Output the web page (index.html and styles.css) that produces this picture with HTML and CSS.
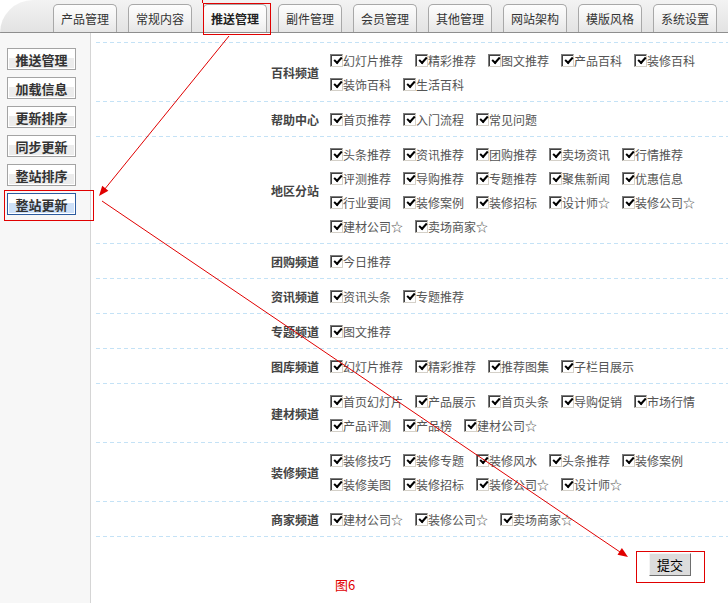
FILE: index.html
```html
<!DOCTYPE html>
<html lang="zh-CN">
<head>
<meta charset="utf-8">
<title>推送管理</title>
<link rel="stylesheet" href="styles.css">
</head>
<body>
<div class="page">
  <div class="topbar">
    <div class="tab">产品管理</div>
    <div class="tab">常规内容</div>
    <div class="tab active">推送管理</div>
    <div class="tab">副件管理</div>
    <div class="tab">会员管理</div>
    <div class="tab">其他管理</div>
    <div class="tab">网站架构</div>
    <div class="tab">模版风格</div>
    <div class="tab">系统设置</div>
  </div>
  <div class="layout">
    <aside class="side">
      <div class="sbtn">推送管理</div>
      <div class="sbtn">加载信息</div>
      <div class="sbtn">更新排序</div>
      <div class="sbtn">同步更新</div>
      <div class="sbtn">整站排序</div>
      <div class="sbtn active">整站更新</div>
    </aside>
    <main class="main">
      <div class="row">
        <div class="label">百科频道</div>
        <div class="opts">
          <span class="opt"><i class="cb"></i>幻灯片推荐</span>
          <span class="opt"><i class="cb"></i>精彩推荐</span>
          <span class="opt"><i class="cb"></i>图文推荐</span>
          <span class="opt"><i class="cb"></i>产品百科</span>
          <span class="opt"><i class="cb"></i>装修百科</span>
          <span class="opt"><i class="cb"></i>装饰百科</span>
          <span class="opt"><i class="cb"></i>生活百科</span>
        </div>
      </div>
      <div class="row">
        <div class="label">帮助中心</div>
        <div class="opts">
          <span class="opt"><i class="cb"></i>首页推荐</span>
          <span class="opt"><i class="cb"></i>入门流程</span>
          <span class="opt"><i class="cb"></i>常见问题</span>
        </div>
      </div>
      <div class="row">
        <div class="label">地区分站</div>
        <div class="opts">
          <span class="opt"><i class="cb"></i>头条推荐</span>
          <span class="opt"><i class="cb"></i>资讯推荐</span>
          <span class="opt"><i class="cb"></i>团购推荐</span>
          <span class="opt"><i class="cb"></i>卖场资讯</span>
          <span class="opt"><i class="cb"></i>行情推荐</span>
          <span class="opt"><i class="cb"></i>评测推荐</span>
          <span class="opt"><i class="cb"></i>导购推荐</span>
          <span class="opt"><i class="cb"></i>专题推荐</span>
          <span class="opt"><i class="cb"></i>聚焦新闻</span>
          <span class="opt"><i class="cb"></i>优惠信息</span>
          <span class="opt"><i class="cb"></i>行业要闻</span>
          <span class="opt"><i class="cb"></i>装修案例</span>
          <span class="opt"><i class="cb"></i>装修招标</span>
          <span class="opt"><i class="cb"></i>设计师☆</span>
          <span class="opt"><i class="cb"></i>装修公司☆</span>
          <span class="opt"><i class="cb"></i>建材公司☆</span>
          <span class="opt"><i class="cb"></i>卖场商家☆</span>
        </div>
      </div>
      <div class="row">
        <div class="label">团购频道</div>
        <div class="opts">
          <span class="opt"><i class="cb"></i>今日推荐</span>
        </div>
      </div>
      <div class="row">
        <div class="label">资讯频道</div>
        <div class="opts">
          <span class="opt"><i class="cb"></i>资讯头条</span>
          <span class="opt"><i class="cb"></i>专题推荐</span>
        </div>
      </div>
      <div class="row">
        <div class="label">专题频道</div>
        <div class="opts">
          <span class="opt"><i class="cb"></i>图文推荐</span>
        </div>
      </div>
      <div class="row">
        <div class="label">图库频道</div>
        <div class="opts">
          <span class="opt"><i class="cb"></i>幻灯片推荐</span>
          <span class="opt"><i class="cb"></i>精彩推荐</span>
          <span class="opt"><i class="cb"></i>推荐图集</span>
          <span class="opt"><i class="cb"></i>子栏目展示</span>
        </div>
      </div>
      <div class="row">
        <div class="label">建材频道</div>
        <div class="opts">
          <span class="opt"><i class="cb"></i>首页幻灯片</span>
          <span class="opt"><i class="cb"></i>产品展示</span>
          <span class="opt"><i class="cb"></i>首页头条</span>
          <span class="opt"><i class="cb"></i>导购促销</span>
          <span class="opt"><i class="cb"></i>市场行情</span>
          <span class="opt"><i class="cb"></i>产品评测</span>
          <span class="opt"><i class="cb"></i>产品榜</span>
          <span class="opt"><i class="cb"></i>建材公司☆</span>
        </div>
      </div>
      <div class="row">
        <div class="label">装修频道</div>
        <div class="opts">
          <span class="opt"><i class="cb"></i>装修技巧</span>
          <span class="opt"><i class="cb"></i>装修专题</span>
          <span class="opt"><i class="cb"></i>装修风水</span>
          <span class="opt"><i class="cb"></i>头条推荐</span>
          <span class="opt"><i class="cb"></i>装修案例</span>
          <span class="opt"><i class="cb"></i>装修美图</span>
          <span class="opt"><i class="cb"></i>装修招标</span>
          <span class="opt"><i class="cb"></i>装修公司☆</span>
          <span class="opt"><i class="cb"></i>设计师☆</span>
        </div>
      </div>
      <div class="row last">
        <div class="label">商家频道</div>
        <div class="opts">
          <span class="opt"><i class="cb"></i>建材公司☆</span>
          <span class="opt"><i class="cb"></i>装修公司☆</span>
          <span class="opt"><i class="cb"></i>卖场商家☆</span>
        </div>
      </div>
      <div class="submit-row"><button class="submit" type="button">提交</button></div>
      <div class="caption">图6</div>
    </main>
  </div>
  <svg class="annot" width="728" height="603" viewBox="0 0 728 603">
    <g fill="none" stroke="#e00000" stroke-width="1">
      <rect x="203.5" y="3.5" width="67" height="31"/>
      <line x1="202.5" y1="0" x2="202.5" y2="3"/>
      <rect x="4.5" y="190.5" width="89" height="30"/>
      <rect x="636.5" y="551.5" width="68" height="31"/>
      <line x1="229" y1="36" x2="104" y2="190"/>
      <line x1="102" y1="201" x2="620" y2="552"/>
    </g>
    <g fill="#e00000">
      <polygon points="99,196 108.4,190.7 102.2,185.7"/>
      <polygon points="628,557 617.5,554.7 621.9,548.1"/>
    </g>
  </svg>
</div>
</body>
</html>
```

FILE: styles.css
```css
* {
  box-sizing: border-box;
  margin: 0;
  padding: 0;
}

html, body {
  width: 728px;
  height: 603px;
  overflow: hidden;
  background: #fff;
}

body {
  font-family: "Noto Sans CJK SC", "Noto Sans", sans-serif;
  font-size: 12px;
  color: #555;
}

.page {
  position: relative;
  width: 728px;
  height: 603px;
}

/* top tab bar */
.topbar {
  height: 33px;
  display: flex;
  align-items: flex-end;
  gap: 11px;
  padding-left: 53px;
  border-bottom: 1px solid #8e8e8e;
  border-top-left-radius: 34px;
  background: linear-gradient(#f3f3f3, #e3e3e3);
}

.tab {
  width: 64px;
  height: 28px;
  display: flex;
  align-items: center;
  justify-content: center;
  border: 1px solid #a8a8a8;
  border-bottom: none;
  border-radius: 5px 5px 0 0;
  background: linear-gradient(#fdfdfd, #f2f2f2 55%, #e6e6e6);
  color: #333;
  font-size: 12px;
  line-height: 1;
}

.tab.active {
  font-weight: bold;
  color: #222;
  background: linear-gradient(#ffffff, #f7f7f7 60%, #ececec);
}

/* layout */
.layout {
  display: flex;
  height: 570px;
}

.side {
  width: 91px;
  flex: none;
  background: #f7f7f7;
  border-right: 1px solid #d5d5d5;
  padding: 15px 0 0 7px;
  display: flex;
  flex-direction: column;
  gap: 7px;
}

.sbtn {
  width: 69px;
  height: 22px;
  border: 1px solid #a4a4a4;
  box-shadow: inset 0 0 0 1px #fff;
  background: linear-gradient(#ffffff 0, #ffffff 45%, #ececec 45%, #ececec 100%);
  font-weight: bold;
  font-size: 13px;
  color: #333;
  display: flex;
  align-items: center;
  justify-content: center;
  line-height: 1;
}

.sbtn.active {
  border-color: #2b5b9f;
  background: linear-gradient(#ffffff 0, #ffffff 45%, #cde0f8 45%, #cde0f8 100%);
}

.main {
  flex: 1;
  padding: 9px 0 0 5px;
  min-width: 0;
}

.row {
  display: flex;
  padding: 6px 0 5px;
  background: linear-gradient(to right, #c4e2f6 4px, transparent 4px) top left / 7px 1px repeat-x;
}

.row.last {
  padding-bottom: 6px;
  background:
    linear-gradient(to right, #c4e2f6 4px, transparent 4px) top left / 7px 1px repeat-x,
    linear-gradient(to right, #c4e2f6 4px, transparent 4px) bottom left / 7px 1px repeat-x;
}

.label {
  width: 234px;
  flex: none;
  align-self: center;
  text-align: right;
  padding-right: 11px;
  font-weight: bold;
  color: #444;
  font-size: 12px;
}

.opts {
  width: 398px;
  display: flex;
  flex-wrap: wrap;
  column-gap: 12px;
}

.opt {
  height: 24px;
  display: flex;
  align-items: center;
  white-space: nowrap;
  color: #555;
}

.cb {
  position: relative;
  width: 13px;
  height: 13px;
  flex: none;
  border: 1px solid;
  border-color: #7d7d7d #d4d0c8 #d4d0c8 #7d7d7d;
  box-shadow: inset 1px 1px 0 #404040;
  background: #fff;
}

.cb::after {
  content: "";
  position: absolute;
  left: 3px;
  top: 2px;
  width: 6px;
  height: 3px;
  border-left: 2px solid #000;
  border-bottom: 2px solid #000;
  transform: rotate(-48deg);
}

.submit-row {
  display: flex;
  justify-content: flex-end;
  padding: 16px 37px 0 0;
}

.submit {
  width: 42px;
  height: 23px;
  border: 1px solid;
  border-color: #f4f4f4 #6e6e6e #6e6e6e #f4f4f4;
  background: #dcdcdc;
  font-family: "Noto Sans CJK SC", sans-serif;
  font-size: 13px;
  color: #000;
  line-height: 1;
}

.caption {
  margin: 1px 0 0 239px;
  color: #e00000;
  font-size: 13px;
  line-height: 16px;
}

.annot {
  position: absolute;
  left: 0;
  top: 0;
  pointer-events: none;
}
```
